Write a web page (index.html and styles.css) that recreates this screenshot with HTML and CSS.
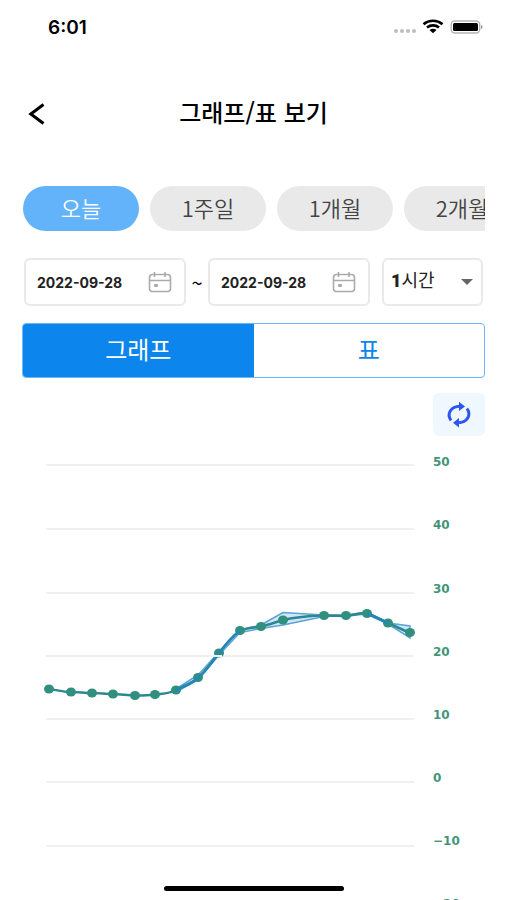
FILE: index.html
```html
<!DOCTYPE html>
<html lang="ko">
<head>
  <meta charset="UTF-8" />
  <meta name="viewport" content="width=device-width, initial-scale=1.0" />
  <title>그래프/표 보기</title>
  <link rel="stylesheet" href="styles.css">
</head>
<body>
  <div class="app">
    <div class="status-bar">
      <span class="time">6:01</span>
      <div class="status-icons">
        <svg width="24" height="20" viewBox="0 0 24 20" fill="#bdbdbd">
          <circle cx="4" cy="14" r="2" /><circle cx="10" cy="14" r="2" /><circle cx="16" cy="14" r="2" /><circle cx="22" cy="14" r="2" />
        </svg>
        <svg width="22" height="20" viewBox="0 0 22 20" fill="none" stroke="#000" stroke-width="2.6">
          <path d="M1.5 7.2C7 2.6 15 2.6 20.5 7.2" />
          <path d="M5 10.5c3.5-2.9 8.5-2.9 12 0" />
          <path d="M7.5 13c2-1.6 5-1.6 7 0L11 16.3z" fill="#000" stroke="none" />
        </svg>
        <svg width="34" height="20" viewBox="0 0 34 20">
          <rect x="1.2" y="4" width="28.500" height="12" rx="3.5" fill="#fff" stroke="#b5b5b5" stroke-width="1.4" />
          <rect x="3" y="6" width="25" height="8" rx="1.5" />
          <path d="M31 8c2 .6 2 3.400 0 4z" fill="#999" />
        </svg>
      </div>
    </div>

    <header class="header">
      <button class="back" aria-label="뒤로">
        <svg width="18" height="24" viewBox="0 0 18 24" fill="none" stroke="#000" stroke-width="3">
          <path d="M15.5 2.5L2.8 12l12.7 9.5" />
        </svg>
      </button>
      <h1>그래프/표 보기</h1>
    </header>

    <main class="content">
      <div class="periods">
        <button class="pill active">오늘</button>
        <button class="pill">1주일</button>
        <button class="pill">1개월</button>
        <button class="pill">2개월</button>
      </div>

      <div class="filters">
        <label class="date-box">
          <input type="text" value="2022-09-28" aria-label="시작일">
          <svg class="calendar" width="24" height="22" viewBox="0 0 24 22" fill="none" stroke="#aaa" stroke-width="1.6">
            <rect x="1.5" y="3.5" width="21" height="17" rx="3" />
            <path d="M1.5 9.5h21M6.5 1v5M17 1v5" />
            <rect x="6" y="13" width="4" height="3" rx="1" fill="#aaa" stroke="none" />
          </svg>
        </label>
        <span class="tilde">~</span>
        <label class="date-box">
          <input type="text" value="2022-09-28" aria-label="종료일">
          <svg class="calendar" width="24" height="22" viewBox="0 0 24 22" fill="none" stroke="#aaa" stroke-width="1.6">
            <rect x="1.5" y="3.5" width="21" height="17" rx="3" />
            <path d="M1.5 9.5h21M6.5 1v5M17 1v5" />
            <rect x="6" y="13" width="4" height="3" rx="1" fill="#aaa" stroke="none" />
          </svg>
        </label>
        <label class="select-box">
          <select aria-label="시간 간격">
            <option>1시간</option>
          </select>
          <svg width="14" height="8" viewBox="0 0 14 8" fill="#666"><path d="M1 1h12L7 7z" /></svg>
        </label>
      </div>

      <div class="tabs">
        <button class="tab active">그래프</button>
        <button class="tab">표</button>
      </div>

      <button class="refresh" aria-label="새로고침">
        <svg width="28" height="28" viewBox="0 0 28 28" fill="none" stroke="#2f55f0" stroke-width="3">
          <path d="M6 19.5C1.5 13 5.500 5.500 15 5.300" />
          <path d="M22 7.500C26.500 14 22.500 21.500 13 21.700" />
          <path d="M14 .8l6 4.600-6 4.600zM14 17l-6 4.700 6 4.800z" fill="#2f55f0" stroke="none" />
        </svg>
      </button>

      <svg class="chart" viewBox="22 436 463 474">
        <!-- grid -->
        <path class="grid" d="M46 465H414M46 529H414M46 593H414M46 656H414M46 719H414M46 782H414M46 846H414" />

        <!-- min / max range -->
        <path class="range" d="M176 689L198 675L219 652L240 630L261 625L283 612.5L324 615L346 615L367 612L388 623L410 626V638L388 624L367 614L346 616L324 616.5L283 625L261 628.5L240 632.5L219 655L198 680L176 692Z" />

        <!-- average -->
        <path class="line" d="M49 689C56 690 64 692 71 692S85 693 92 693S106 694 113 694S128 695.5 135 695.5S148 695.5 155 694.5S169 694 176 690S191 684 198 678S212 662 219 653S233 635 240 631S254 628 261 626.5S276 622 283 620S313 615.5 324 615.5S339 616 346 616S360 612 367 613.5S381 620 388 623L410 633" />
        <g class="dots">
          <ellipse cx="49" cy="689" rx="5" ry="4.5" />
          <ellipse cx="71" cy="692" rx="5" ry="4.5" />
          <ellipse cx="92" cy="693" rx="5" ry="4.5" />
          <ellipse cx="113" cy="694" rx="5" ry="4.5" />
          <ellipse cx="135" cy="695.5" rx="5" ry="4.5" />
          <ellipse cx="155" cy="694.5" rx="5" ry="4.5" />
          <ellipse cx="176" cy="690" rx="5" ry="4.5" />
          <ellipse cx="198" cy="677.5" rx="5" ry="4.5" />
          <ellipse cx="219" cy="653" rx="5" ry="4.5" />
          <ellipse cx="240" cy="630.5" rx="5" ry="4.5" />
          <ellipse cx="261" cy="626.5" rx="5" ry="4.5" />
          <ellipse cx="283" cy="620" rx="5" ry="4.5" />
          <ellipse cx="324" cy="615.5" rx="5" ry="4.5" />
          <ellipse cx="346" cy="615.5" rx="5" ry="4.5" />
          <ellipse cx="367" cy="613.5" rx="5" ry="4.5" />
          <ellipse cx="388" cy="623" rx="5" ry="4.5" />
          <ellipse cx="410" cy="632.5" rx="5" ry="4.5" />
        </g>
        <path class="line-top" d="M176 690C183 687 191 684 198 678S212 662 219 653S233 635 240 631M367 613.5L388 623" />
        <path class="grid" d="M213 656H222" />

        <g class="axis">
          <text x="433" y="466">50</text>
          <text x="433" y="529">40</text>
          <text x="433" y="593">30</text>
          <text x="433" y="656">20</text>
          <text x="433" y="719">10</text>
          <text x="433" y="782">0</text>
          <text x="433" y="845">−10</text>
          <text x="433" y="908">−20</text>
        </g>
      </svg>
    </main>

    <div class="home-indicator"></div>
  </div>
</body>
</html>
```

FILE: styles.css
```css
* {
  box-sizing: border-box;
}

body {
  margin: 0;
  background: #fff;
  color: #000;
  font-family: "Noto Sans CJK KR", sans-serif;
}

button, input, select {
  font-family: inherit;
  border: 0;
  padding: 0;
  background: none;
  cursor: pointer;
}

.app {
  position: relative;
  height: 100vh;
  overflow: hidden;
}

.status-bar {
  display: flex;
  align-items: center;
  justify-content: space-between;
  height: 54px;
  padding: 0 23px 0 48px;
}

.time {
  font-family: Inter, sans-serif;
  font-size: 19px;
  font-weight: 600;
}

.status-icons {
  display: flex;
  align-items: center;
  gap: 6px;
}

.header {
  display: grid;
  grid-template-columns: 40px 1fr 40px;
  align-items: center;
  height: 120px;
  padding: 0 22px;
}

.back {
  display: flex;
  padding: 6px;
}

h1 {
  margin: 0;
  padding-bottom: 4px;
  font-size: 24px;
  font-weight: 500;
  line-height: 36px;
  text-align: center;
}

.content {
  padding: 12px 22px 0;
}

.periods {
  display: flex;
  gap: 11px;
  padding-left: 1px;
  overflow-x: auto;
  scrollbar-width: none;
}

.pill {
  flex: 0 0 116px;
  height: 45px;
  border-radius: 23px;
  background: #e9e9e9;
  color: #444;
  font-size: 22px;
  font-weight: 350;
  line-height: 40px;
  padding-bottom: 4px;
}

.pill.active {
  background: #63b3fa;
  color: #fff;
}

.filters {
  display: flex;
  align-items: center;
  margin-top: 27px;
  padding: 0 2px;
}

.date-box,
.select-box {
  display: flex;
  align-items: center;
  height: 48px;
  border: 2px solid #e9e9e9;
  border-radius: 6px;
}

.date-box {
  flex: 1 1 162px;
  min-width: 0;
  padding: 0 12px 0 11px;
}

.date-box input {
  flex: 1;
  min-width: 0;
  font-family: Inter, sans-serif;
  font-size: 14px;
  font-weight: 700;
  color: #222;
}

.tilde {
  width: 22px;
  font-size: 20px;
  text-align: center;
}

.select-box {
  position: relative;
  flex: 1 1 101px;
  margin-left: 12px;
}

.select-box select {
  appearance: none;
  width: 100%;
  height: 100%;
  padding: 0 26px 4px 7px;
  font-family: "Roboto Black", "Noto Sans CJK KR", sans-serif;
  font-size: 18px;
  color: #222;
}

.select-box svg {
  position: absolute;
  right: 7px;
  pointer-events: none;
}

.tabs {
  display: flex;
  height: 55px;
  margin-top: 17px;
  border: 1px solid #6db6f7;
  border-radius: 4px;
  overflow: hidden;
}

.tab {
  flex: 1;
  padding-bottom: 4px;
  color: #0c86ec;
  font-size: 24px;
  line-height: 36px;
}

.tab.active {
  background: #0c86ec;
  color: #fff;
}

.refresh {
  display: flex;
  align-items: center;
  justify-content: center;
  width: 52px;
  height: 43px;
  margin: 15px 0 0 auto;
  border-radius: 6px;
  background: #eff7ff;
}

.chart {
  display: block;
  width: 100%;
}

.grid {
  fill: none;
  stroke: #f0f0f0;
  stroke-width: 2;
}

.range {
  fill: rgba(70, 155, 220, 0.25);
  stroke: #5ba3d9;
  stroke-width: 1.5;
}

.line {
  fill: none;
  stroke: #2b8790;
  stroke-width: 2.5;
}

.line-top {
  fill: none;
  stroke: #2686b4;
  stroke-width: 2.5;
}

.dots {
  fill: #318f80;
}

.axis {
  fill: #43957a;
  font-family: "DejaVu Sans", sans-serif;
  font-size: 12px;
  font-weight: 700;
}

.home-indicator {
  position: absolute;
  bottom: 9px;
  left: 50%;
  width: 180px;
  height: 5px;
  border-radius: 3px;
  background: #000;
  transform: translateX(-50%);
}
```
